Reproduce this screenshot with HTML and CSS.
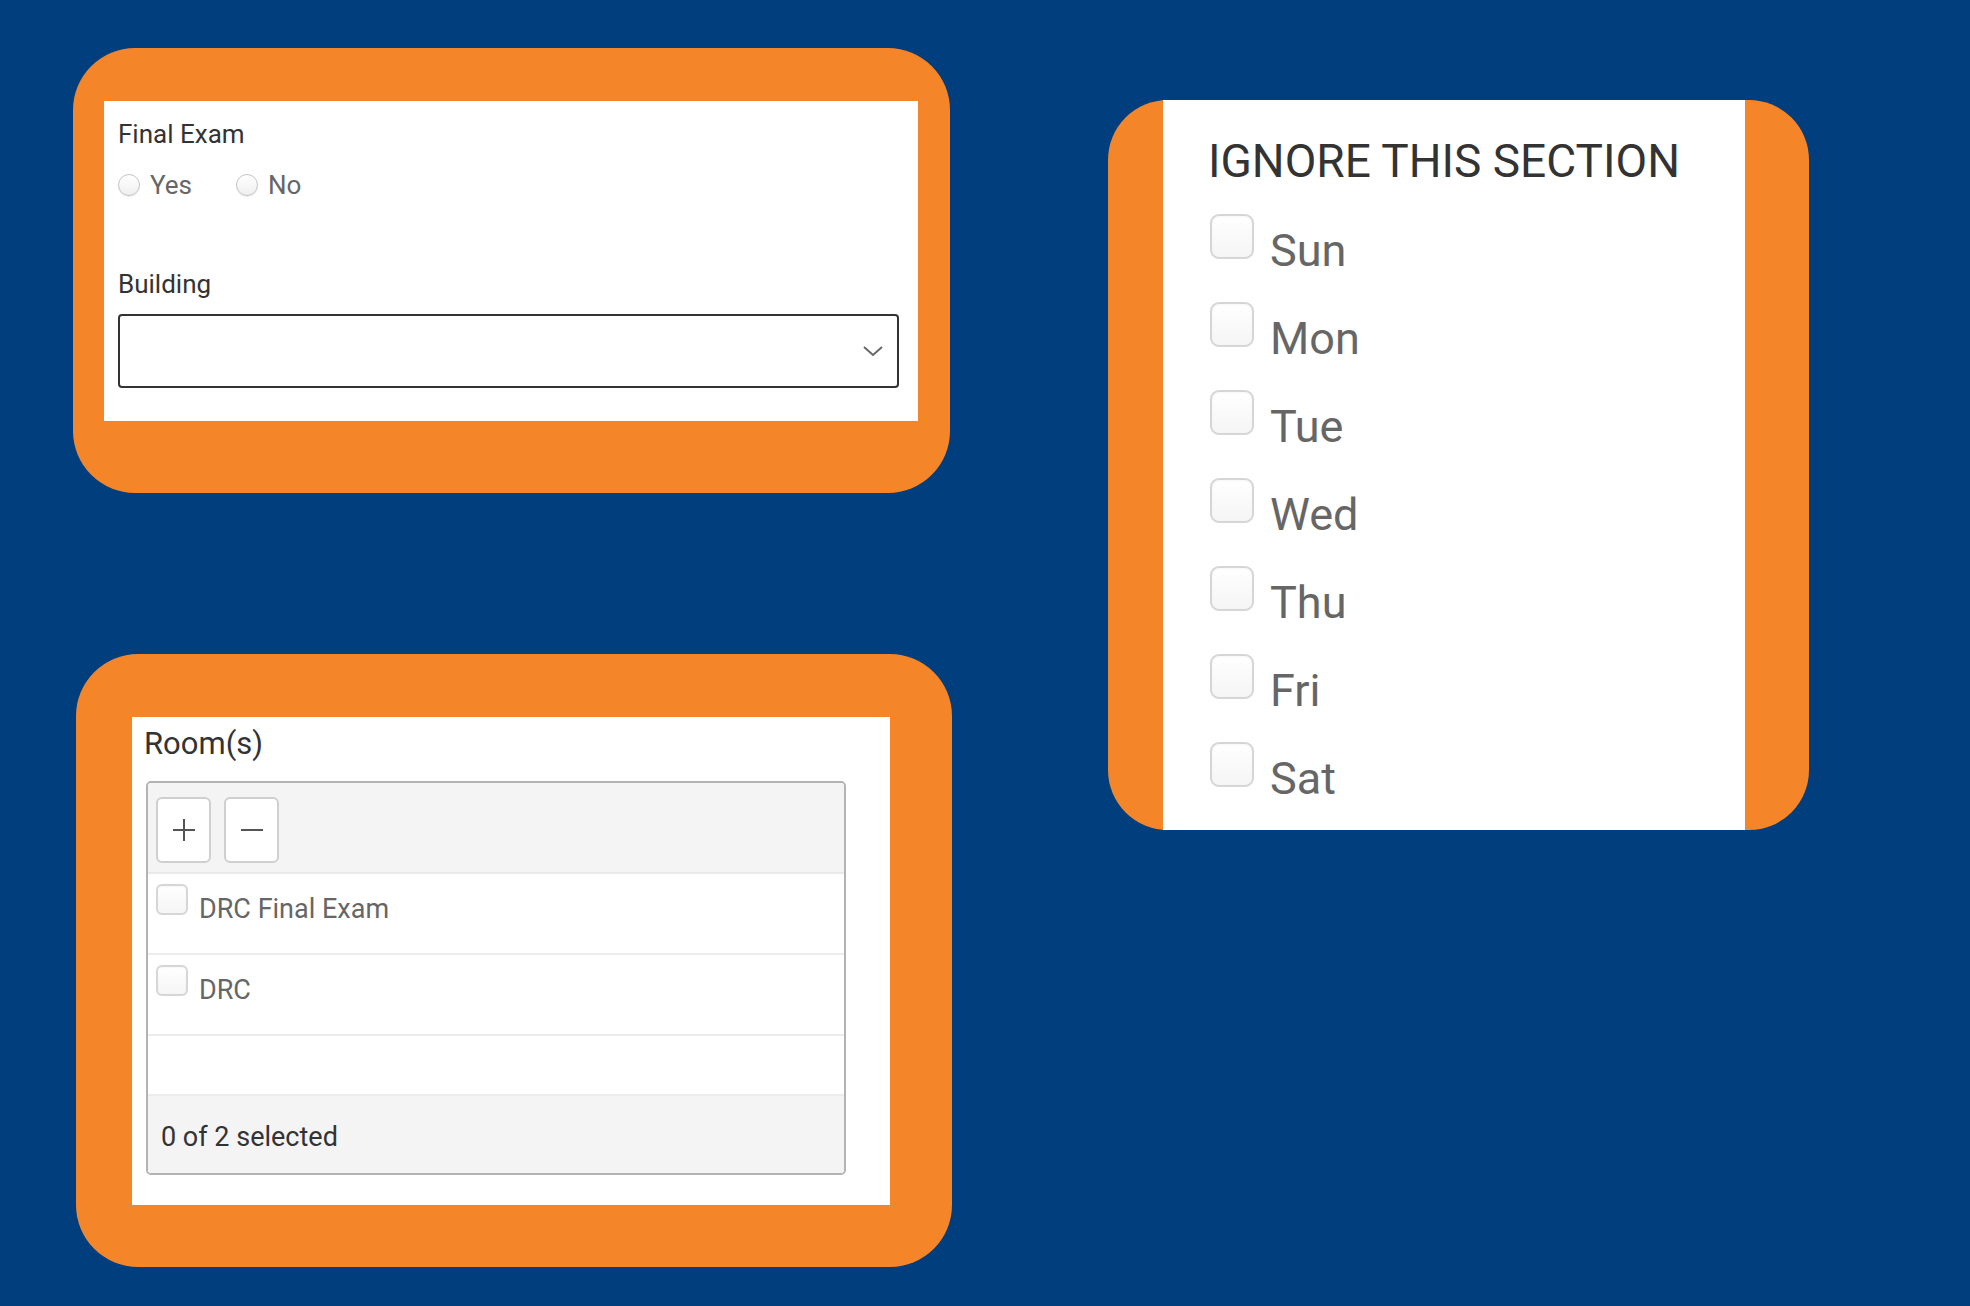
FILE: index.html
```html
<!DOCTYPE html>
<html lang="en">
<head>
    <meta charset="UTF-8">
    <title>Exam Form</title>
    <meta name="viewport" content="width=device-width, initial-scale=1.0">
    <link rel="stylesheet" href="styles.css">
</head>
<body>

    <div class="page">
        <!-- Left column: exam + rooms -->
        <div class="left-col">
            <div class="frame frame-exam">
                <div class="sheet sheet-exam">
                    <div class="field-label">Final Exam</div>
                    <div class="radio-row">
                        <label class="radio-opt"><span class="radio"></span>Yes</label>
                        <label class="radio-opt"><span class="radio"></span>No</label>
                    </div>
                    <div class="field-label building-label">Building</div>
                    <div class="select-box">
                        <svg width="22" height="12" viewBox="0 0 22 12">
                            <polyline points="2,2 11,10 20,2" fill="none" stroke="#666" stroke-width="2"/>
                        </svg>
                    </div>
                </div>
            </div>

            <div class="frame frame-rooms">
                <div class="sheet sheet-rooms">
                    <div class="rooms-label">Room(s)</div>
                    <div class="list-box">
                        <div class="list-toolbar">
                            <button class="tool-btn" type="button">
                                <svg width="24" height="24" viewBox="0 0 24 24">
                                    <path d="M12 1v22M1 12h22" stroke="#555" stroke-width="2" fill="none"/>
                                </svg>
                            </button>
                            <button class="tool-btn" type="button">
                                <svg width="24" height="24" viewBox="0 0 24 24">
                                    <path d="M1 12h22" stroke="#555" stroke-width="2" fill="none"/>
                                </svg>
                            </button>
                        </div>
                        <div class="list-row">
                            <span class="check check-sm"></span>
                            <span class="row-text">DRC Final Exam</span>
                        </div>
                        <div class="list-row">
                            <span class="check check-sm"></span>
                            <span class="row-text">DRC</span>
                        </div>
                        <div class="list-row list-row-empty"></div>
                        <div class="list-footer">0 of 2 selected</div>
                    </div>
                </div>
            </div>
        </div>

        <!-- Right column: days -->
        <div class="right-col">
            <div class="frame frame-days">
                <div class="sheet sheet-days">
                    <div class="days-title">IGNORE THIS SECTION</div>
                    <div class="day-row"><span class="check check-lg"></span><span class="day-text">Sun</span></div>
                    <div class="day-row"><span class="check check-lg"></span><span class="day-text">Mon</span></div>
                    <div class="day-row"><span class="check check-lg"></span><span class="day-text">Tue</span></div>
                    <div class="day-row"><span class="check check-lg"></span><span class="day-text">Wed</span></div>
                    <div class="day-row"><span class="check check-lg"></span><span class="day-text">Thu</span></div>
                    <div class="day-row"><span class="check check-lg"></span><span class="day-text">Fri</span></div>
                    <div class="day-row"><span class="check check-lg"></span><span class="day-text">Sat</span></div>
                </div>
            </div>
        </div>
    </div>

</body>
</html>
```

FILE: styles.css
```css
/* General */
body {
    margin: 0;
    padding: 0;
    background-color: #003e7e;
    font-family: Roboto, 'Liberation Sans', sans-serif;
    min-height: 1306px;
}

.page {
    display: flex;
    align-items: flex-start;
    padding: 48px 0 0 73px;
}

.left-col {
    display: flex;
    flex-direction: column;
    width: 879px;
}

.right-col {
    margin-left: 156px;
    padding-top: 52px;
}

/* Orange frames */
.frame {
    background-color: #f58529;
    border-radius: 62px;
}

.frame-exam {
    width: 877px;
    box-sizing: border-box;
    padding: 53px 32px 72px 31px;
}

.frame-rooms {
    width: 876px;
    box-sizing: border-box;
    margin-top: 161px;
    margin-left: 3px;
    padding: 63px 62px 62px 56px;
}

.frame-days {
    width: 701px;
    box-sizing: border-box;
    padding: 0 64px 0 55px;
    border-radius: 60px;
}

.sheet {
    background-color: white;
}

/* Exam panel */
.sheet-exam {
    padding: 18px 19px 33px 14px;
}

.field-label {
    font-size: 26px;
    line-height: 30px;
    color: #333;
}

.radio-row {
    display: flex;
    align-items: center;
    margin-top: 21px;
    height: 30px;
}

.radio-opt {
    display: flex;
    align-items: center;
    font-size: 26px;
    line-height: 30px;
    color: #666;
    margin-right: 44px;
}

.radio {
    width: 20px;
    height: 20px;
    border: 1px solid #c4c4c4;
    border-radius: 50%;
    background: linear-gradient(#ffffff, #efefef);
    box-shadow: 0 1px 1px rgba(0, 0, 0, 0.08);
    margin-right: 10px;
}

.building-label {
    margin-top: 69px;
}

.select-box {
    margin-top: 15px;
    width: 781px;
    height: 74px;
    box-sizing: border-box;
    border: 2px solid #333;
    border-radius: 4px;
    display: flex;
    align-items: center;
    justify-content: flex-end;
    padding-right: 13px;
}

/* Rooms panel */
.sheet-rooms {
    padding: 9px 0 30px 14px;
}

.rooms-label {
    font-size: 31px;
    line-height: 36px;
    color: #333;
    margin-left: -2px;
}

.list-box {
    margin-top: 19px;
    width: 700px;
    box-sizing: border-box;
    border: 2px solid #b3b3b3;
    border-radius: 5px;
    overflow: hidden;
}

.list-toolbar {
    display: flex;
    gap: 13px;
    padding: 14px 8px 9px;
    background-color: #f4f4f4;
    border-bottom: 2px solid #e9e9e9;
}

.tool-btn {
    width: 55px;
    height: 66px;
    padding: 0;
    border: 2px solid #cfcfcf;
    border-radius: 6px;
    background-color: white;
    display: flex;
    align-items: center;
    justify-content: center;
}

.list-row {
    display: flex;
    align-items: flex-start;
    height: 81px;
    padding: 10px 8px 0;
    box-sizing: border-box;
    border-bottom: 2px solid #ececec;
}

.list-row-empty {
    height: 60px;
}

.row-text {
    font-size: 27px;
    line-height: 32px;
    color: #666;
    margin-top: 9px;
    margin-left: 11px;
}

.list-footer {
    background-color: #f4f4f4;
    height: 77px;
    box-sizing: border-box;
    padding: 25px 13px 0;
    font-size: 27px;
    line-height: 32px;
    color: #333;
}

/* Checkboxes */
.check {
    flex: none;
    box-sizing: border-box;
    border: 2px solid #d6d6d6;
    background: linear-gradient(#ffffff, #f5f5f5);
    box-shadow: inset 0 1px 2px rgba(0, 0, 0, 0.04);
}

.check-sm {
    width: 32px;
    height: 31px;
    border-radius: 6px;
}

.check-lg {
    width: 44px;
    height: 45px;
    border-radius: 9px;
}

/* Days panel */
.sheet-days {
    padding: 35px 0 0 45px;
    height: 730px;
    box-sizing: border-box;
}

.days-title {
    font-size: 46px;
    line-height: 53px;
    color: #333;
    margin-bottom: 26px;
}

.day-row {
    display: flex;
    align-items: flex-start;
    height: 88px;
    padding-left: 2px;
}

.day-text {
    font-size: 45px;
    line-height: 52px;
    color: #666;
    margin-top: 11px;
    margin-left: 16px;
}
```
